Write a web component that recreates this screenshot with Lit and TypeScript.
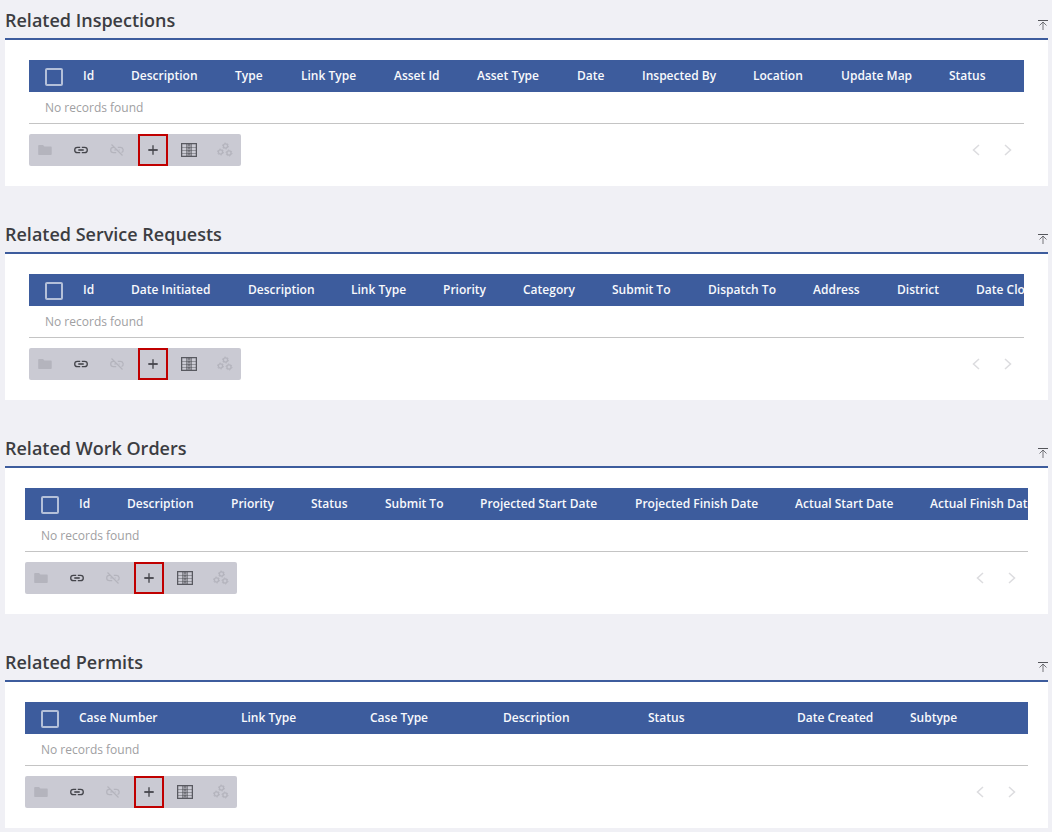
import { LitElement, html, css, svg } from "lit";
import { customElement, property } from "lit/decorators.js";

interface Column {
  label: string;
  width?: number;
}

interface Panel {
  title: string;
  wide?: boolean;
  columns: Column[];
}

const col = (label: string, width?: number): Column => ({ label, width });

const panels: Panel[] = [
  {
    title: "Related Inspections",
    columns: [
      col("Id", 48), col("Description", 104), col("Type", 66), col("Link Type", 93),
      col("Asset Id", 83), col("Asset Type", 100), col("Date", 65), col("Inspected By", 111),
      col("Location", 88), col("Update Map", 108), col("Status"),
    ],
  },
  {
    title: "Related Service Requests",
    columns: [
      col("Id", 48), col("Date Initiated", 117), col("Description", 103), col("Link Type", 92),
      col("Priority", 80), col("Category", 89), col("Submit To", 96), col("Dispatch To", 105),
      col("Address", 84), col("District", 79), col("Date Closed", 105),
    ],
  },
  {
    title: "Related Work Orders",
    wide: true,
    columns: [
      col("Id", 48), col("Description", 104), col("Priority", 80), col("Status", 74),
      col("Submit To", 95), col("Projected Start Date", 155), col("Projected Finish Date", 160),
      col("Actual Start Date", 135), col("Actual Finish Date", 145),
    ],
  },
  {
    title: "Related Permits",
    wide: true,
    columns: [
      col("Case Number", 162), col("Link Type", 129), col("Case Type", 133), col("Description", 145),
      col("Status", 149), col("Date Created", 113), col("Subtype"),
    ],
  },
];

const gear = (x: number, y: number) => svg`
  <circle cx=${x} cy=${y} r="2.1" fill="none" stroke="currentColor" stroke-width="1.3"></circle>
  <circle cx=${x} cy=${y} r="3" fill="none" stroke="currentColor" stroke-width="1" stroke-dasharray="1.4 1.74"></circle>`;

const icons = {
  folder: svg`<path fill="currentColor" d="M1.200 4.200c0-.7.4-1.200 1.100-1.200h3.700l1.400 1.500h6.200c.7 0 1.100.4 1.100 1v6.500c0 .6-.4 1-1.100 1H2.300c-.7 0-1.100-.4-1.100-1z"></path>`,
  link: svg`<path fill="none" stroke="currentColor" stroke-width="1.300" d="M7.200 5.300H4.400a2.700 2.700 0 0 0 0 5.400h2.800M8.800 5.300h2.800a2.700 2.700 0 0 1 0 5.400H8.800"></path><path fill="none" stroke="currentColor" stroke-width="1.600" d="M5.300 8h5.400"></path>`,
  unlink: svg`<path fill="none" stroke="currentColor" stroke-width="1.200" d="M2.500 2.500l11 11M5 5.300H4.400a2.700 2.700 0 0 0 0 5.400h2.800M8.800 5.300h2.800a2.700 2.700 0 0 1 .9 5.200M5.300 8h2.200M9.800 8h.9"></path>`,
  add: svg`<path fill="none" stroke="currentColor" stroke-width="1.800" stroke-opacity=".75" d="M8 3.300v9.400"></path><path fill="none" stroke="currentColor" stroke-width="1.800" d="M3.300 8h9.400"></path>`,
  grid: svg`<path fill="currentColor" fill-opacity=".35" d="M5.500 2h5v12h-5z"></path><path fill="none" stroke="currentColor" stroke-opacity=".4" d="M1 5.500h14M1 8.500h14M1 11.500h14M5.500 2v12M10.500 2v12"></path><path fill="none" stroke="currentColor" stroke-opacity=".6" stroke-dasharray="2 1" d="M8 2v12"></path><path fill="none" stroke="currentColor" stroke-opacity=".85" stroke-width="1.300" d="M.6 1.600h14.800v12.800H.6z"></path>`,
  gears: svg`${gear(8.5, 4)}${gear(3.5, 10)}${gear(12, 11)}`,
};

@customElement("related-panel")
export class RelatedPanel extends LitElement {
  @property({ attribute: false }) panel!: Panel;

  static styles = css`
    :host { display: block; min-width: 0; }
    .header {
      display: flex;
      align-items: flex-end;
      justify-content: space-between;
      height: 38px;
      border-bottom: 2px solid #3d5c9d;
    }
    h2 {
      margin: 0;
      padding-bottom: 6px;
      font-size: 18px;
      line-height: 24px;
      font-weight: 600;
      color: #3c3d42;
    }
    button {
      display: flex;
      align-items: center;
      justify-content: center;
      width: 32px;
      height: 32px;
      padding: 0;
      border: 0;
      background: none;
      color: #44454b;
    }
    button:disabled { color: #b4b4bd; }
    button svg { width: 16px; height: 16px; }
    .top { width: 10px; height: 12px; margin-bottom: 7px; color: #55565b; }
    .top svg { width: 10px; height: 12px; }
    .body { padding: 20px 24px; background: #fff; }
    .body.wide { padding: 20px; }
    .scroller { overflow: hidden; border-bottom: 1px solid #c4c4c4; }
    table { width: 100%; table-layout: fixed; border-collapse: collapse; }
    .check { width: 54px; }
    th {
      height: 32px;
      padding: 0;
      background: #3d5c9d;
      color: #f8f9fc;
      font-size: 12px;
      line-height: 16px;
      font-weight: 600;
      text-align: left;
      white-space: nowrap;
    }
    th.check { padding-left: 16px; box-sizing: border-box; }
    input {
      appearance: none;
      display: block;
      width: 18px;
      height: 18px;
      margin: 2px 0 0;
      box-sizing: border-box;
      border: 2px solid #b4c0d9;
      border-radius: 2px;
    }
    td {
      height: 31px;
      padding: 0 16px;
      font-size: 12px;
      line-height: 16px;
      font-weight: 400;
      color: #a0a0a2;
    }
    .footer { display: flex; justify-content: space-between; margin-top: 10px; }
    .tools { display: flex; gap: 4px; background: #cacad3; border-radius: 2px; }
    .marked { position: relative; }
    .marked::after {
      content: "";
      position: absolute;
      inset: 0 1px;
      border: 2px solid #c00000;
    }
    .pager { display: flex; }
    .pager button:disabled { color: #dcdcdf; }
  `;

  render() {
    const { title, columns, wide } = this.panel;
    return html`
      <section aria-label=${title}>
        <div class="header">
          <h2>${title}</h2>
          <button class="top" aria-label="Back to top">
            <svg viewBox="0 0 10 12"><path fill="none" stroke="currentColor" d="M0 1.500h10"></path><path fill="none" stroke="currentColor" stroke-opacity=".8" d="M5 3v8M1.500 6.500L5 3l3.500 3.500"></path></svg>
          </button>
        </div>
        <div class="body ${wide ? "wide" : ""}">
          <div class="scroller">
            <table>
              <colgroup>
                <col class="check" />
                ${columns.map((c) => html`<col style=${c.width ? `width:${c.width}px` : ""} />`)}
              </colgroup>
              <thead>
                <tr>
                  <th class="check"><input type="checkbox" aria-label="Select all" /></th>
                  ${columns.map((c) => html`<th scope="col">${c.label}</th>`)}
                </tr>
              </thead>
              <tbody>
                <tr><td colspan=${columns.length + 1}>No records found</td></tr>
              </tbody>
            </table>
          </div>
          <div class="footer">
            <div class="tools">
              ${this.tool("Open", icons.folder, true)}
              ${this.tool("Link", icons.link)}
              ${this.tool("Unlink", icons.unlink, true)}
              ${this.tool("Add", icons.add, false, true)}
              ${this.tool("Columns", icons.grid)}
              ${this.tool("Settings", icons.gears, true)}
            </div>
            <div class="pager">
              <button disabled aria-label="Previous page">
                <svg viewBox="0 0 16 16"><path fill="none" stroke="currentColor" stroke-width="1.500" d="M11 3L5.500 8l5.500 5"></path></svg>
              </button>
              <button disabled aria-label="Next page">
                <svg viewBox="0 0 16 16"><path fill="none" stroke="currentColor" stroke-width="1.500" d="M5 3l5.500 5L5 13"></path></svg>
              </button>
            </div>
          </div>
        </div>
      </section>
    `;
  }

  private tool(label: string, icon: unknown, disabled = false, marked = false) {
    return html`<button class=${marked ? "marked" : ""} ?disabled=${disabled} aria-label=${label}>
      <svg viewBox="0 0 16 16">${icon}</svg>
    </button>`;
  }
}

@customElement("app-root")
export class AppRoot extends LitElement {
  static styles = css`
    :host {
      display: block;
      min-height: 100vh;
      box-sizing: border-box;
      padding: 0 4px 4px 5px;
      background: #f0f0f5;
      font-family: "Open Sans", sans-serif;
    }
    main { display: flex; flex-direction: column; gap: 28px; }
  `;

  render() {
    return html`<main>${panels.map((p) => html`<related-panel .panel=${p}></related-panel>`)}</main>`;
  }
}
